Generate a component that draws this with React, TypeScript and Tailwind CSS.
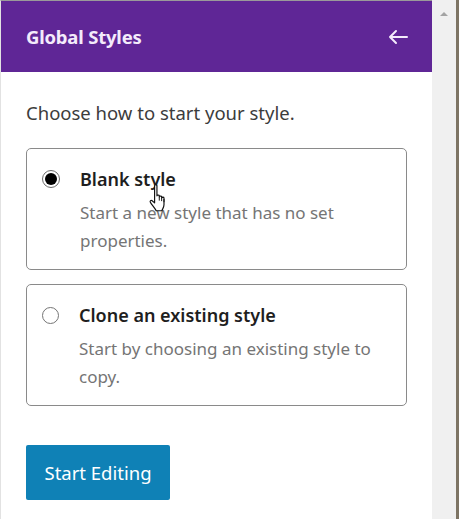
import { useState } from 'react'

const font = { fontFamily: '"Noto Sans", "Open Sans", sans-serif' }

function Radio({ checked }: { checked: boolean }) {
  if (checked) {
    return (
      <span className="mt-[4px] flex h-[18px] w-[18px] shrink-0 items-center justify-center rounded-full border border-[#6b6b6b] bg-white">
        <span className="h-[12px] w-[12px] rounded-full bg-black" />
      </span>
    )
  }
  return <span className="mt-[5px] h-[17px] w-[17px] shrink-0 rounded-full border-[1.5px] border-[#757575] bg-white" />
}

function HandCursor() {
  return (
    <svg className="pointer-events-none absolute left-[148px] top-[183px]" width="26" height="32" viewBox="0 0 24 30">
      <path
        d="M6 2.5c0-1.2 2.2-1.2 2.2 0V12c0-1 2.2-1 2.2 0v1c0-1 2.2-1 2.2 0v1c0-1 2.2-1 2.2 0v6.5c0 2.5-1.5 4-2 5.5H7.5C6.5 24 3 20 2 18c-.7-1.3.7-2.2 1.7-1.4L6 18.6Z"
        fill="#fff"
        stroke="#111"
        strokeWidth="1.1"
        strokeLinejoin="round"
      />
      <path d="M10.4 13v3.5M12.6 14v3M14.8 15v3" stroke="#111" strokeWidth="0.9" />
    </svg>
  )
}

export default function App() {
  const [choice, setChoice] = useState<'blank' | 'clone'>('blank')

  const options = [
    { id: 'blank' as const, title: 'Blank style', desc: 'Start a new style that has no set properties.' },
    { id: 'clone' as const, title: 'Clone an existing style', desc: 'Start by choosing an existing style to copy.' },
  ]

  return (
    <div className="relative flex h-[519px] w-[459px] overflow-hidden bg-white" style={font}>
      {/* Panel */}
      <div className="flex w-[432px] flex-col border-l border-t border-l-[#e2e2e2] border-t-[#9a9a9a]">
        <div className="flex h-[71px] items-center justify-between bg-[#5f2696] pl-[25px] pr-[23px]">
          <h1 className="text-[18.5px] font-bold tracking-[-0.2px] text-[#f4ebfb]">Global Styles</h1>
          <svg width="22" height="16" viewBox="0 0 22 16" fill="none" stroke="#f4ebfb" strokeWidth="2" strokeLinecap="round" strokeLinejoin="round">
            <path d="M20 8H3M9 2L3 8l6 6" />
          </svg>
        </div>

        <div className="flex flex-col px-[25px] pt-[28px]">
          <p className="text-[18.5px] leading-[26px] text-[#3c3c3c]">Choose how to start your style.</p>

          <div className="mt-[22px] flex flex-col gap-[14px]">
            {options.map((o) => (
              <label
                key={o.id}
                onClick={() => setChoice(o.id)}
                className="flex h-[122px] cursor-pointer gap-[20px] rounded-[5px] border border-[#8a8a8a] pl-[15px] pr-[12px] pt-[17px]"
              >
                <Radio checked={choice === o.id} />
                <div className="flex flex-col">
                  <span className="text-[18px] font-semibold leading-[26px] text-[#1e1e1e]">{o.title}</span>
                  <span className="mt-[7px] text-[17px] leading-[28px] text-[#757575]">{o.desc}</span>
                </div>
              </label>
            ))}
          </div>

          <button className="mt-[39px] h-[55px] w-[144px] rounded-[2px] bg-[#0f81b6] text-[18.5px] text-white">
            Start Editing
          </button>
        </div>
      </div>

      {/* Scrollbar */}
      <div className="flex w-[24px] justify-center bg-[#f0f0f0] pt-[12px]">
        <div className="h-0 w-0 border-x-[4px] border-b-[4px] border-x-transparent border-b-[#a3a3a3]" />
      </div>
      <div className="w-[3px] bg-[#7d7464]" />

      <HandCursor />
    </div>
  )
}
